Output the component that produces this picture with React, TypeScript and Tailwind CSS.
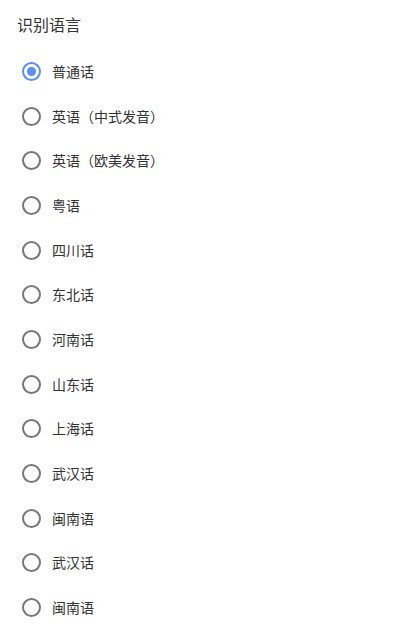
import { useState } from 'react';

const options = [
    '普通话',
    '英语（中式发音）',
    '英语（欧美发音）',
    '粤语',
    '四川话',
    '东北话',
    '河南话',
    '山东话',
    '上海话',
    '武汉话',
    '闽南语',
    '武汉话',
    '闽南语',
];

const App = () => {
    const [selected, setSelected] = useState(0);

    return (
        <div className="w-[400px] h-[632px] overflow-hidden bg-white text-[#333333] [font-family:'Noto_Sans_CJK_SC',sans-serif]">
            <div className="pl-[17px] pt-[12px] h-[49.2px] text-[16px] leading-[24px]">识别语言</div>
            <div className="flex flex-col">
                {options.map((label, i) => (
                    <button
                        key={i}
                        onClick={() => setSelected(i)}
                        className="flex items-center h-[44.67px] pl-[22px] text-left"
                    >
                        <span
                            className={`w-[19px] h-[19px] rounded-full border-2 flex items-center justify-center shrink-0 ${selected === i ? 'border-[#5b8ff0]' : 'border-[#777777]'}`}
                        >
                            {selected === i && <span className="w-[9px] h-[9px] rounded-full bg-[#5b8ff0]" />}
                        </span>
                        <span className="ml-[11px] text-[14px] leading-[20px] -mt-[1px]">{label}</span>
                    </button>
                ))}
            </div>
        </div>
    );
};

export default App;
